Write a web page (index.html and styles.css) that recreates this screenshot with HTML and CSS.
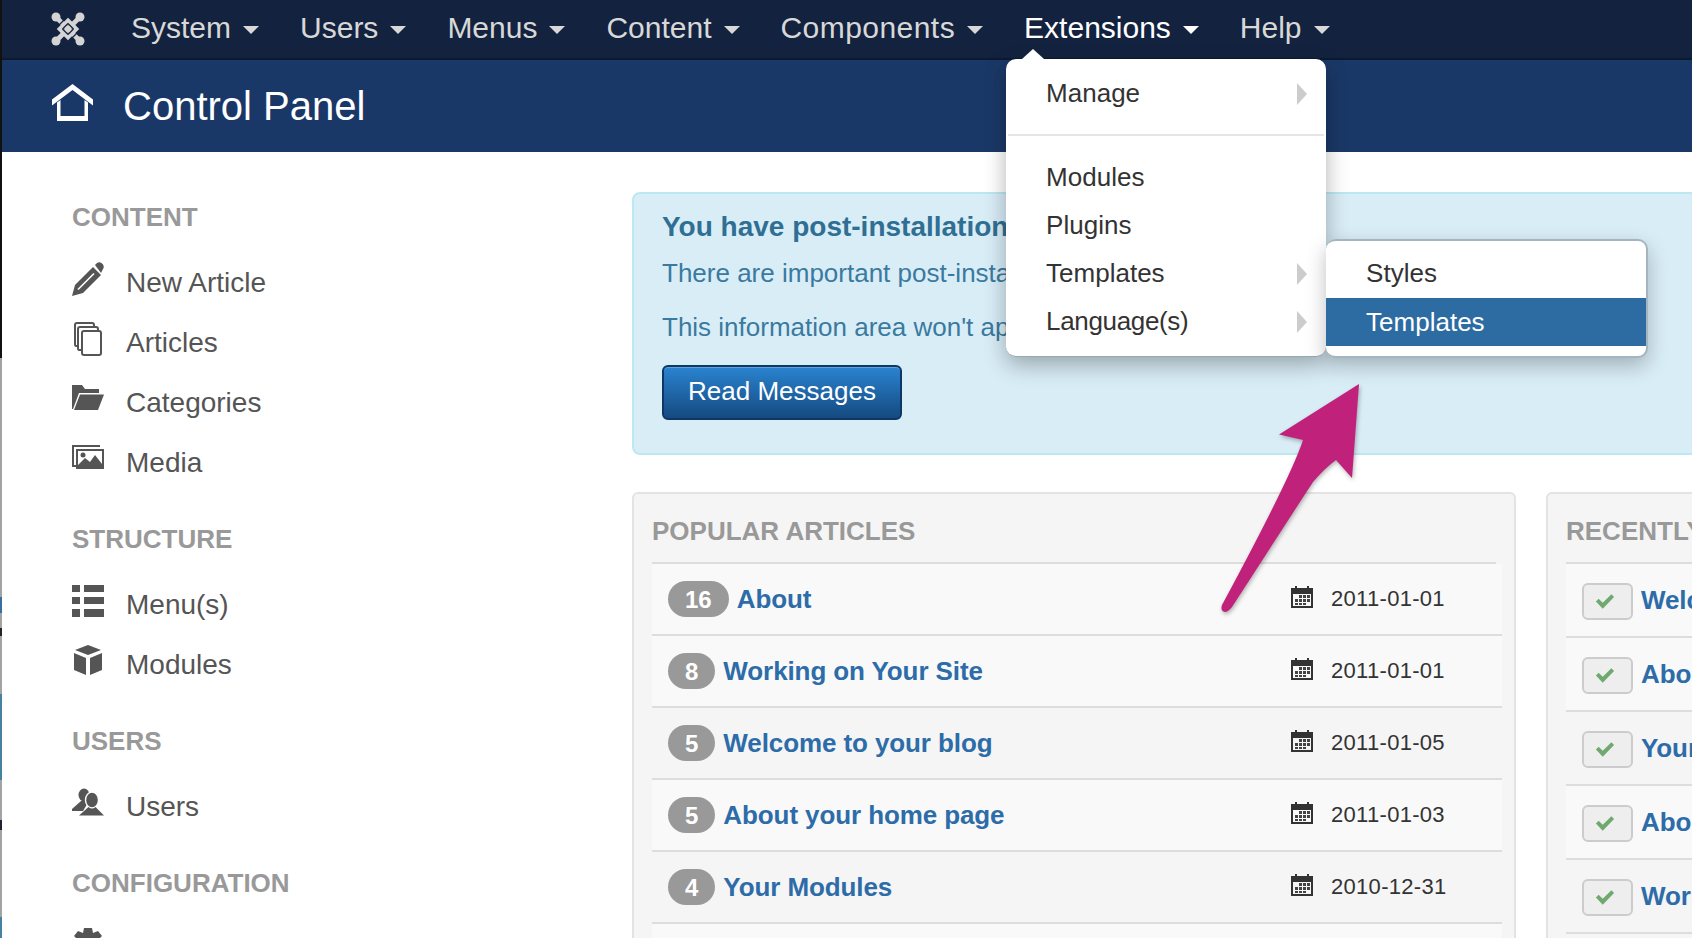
FILE: index.html
```html
<!DOCTYPE html>
<html lang="en">
<head>
    <meta charset="UTF-8">
    <meta name="viewport" content="width=device-width, initial-scale=1.0">
    <title>Control Panel</title>
    <link rel="stylesheet" href="styles.css">
</head>
<body>
    <div class="edge"></div>

    <nav class="navbar">
        <svg class="logo" viewBox="0 0 34 34">
            <g fill="#d4d4d4">
                <circle cx="5" cy="5" r="4.500"/><circle cx="29" cy="5" r="4.500"/>
                <circle cx="5" cy="29" r="4.500"/><circle cx="29" cy="29" r="4.500"/>
            </g>
            <g fill="none" stroke="#d4d4d4" stroke-width="4.600">
                <path d="M6 6L22 22M28 6L12 22M6 28L22 12M28 28L12 12"/>
                <path d="M17 9L25 17L17 25L9 17Z"/>
            </g>
            <g fill="none" stroke="#13233f" stroke-width="1.200">
                <path d="M11.500 17L17 11.500M17 22.500L22.500 17M13 8L8 13M21 26L26 21"/>
                <path d="M17 11.500L22.500 17M11.500 17L17 22.500"/>
            </g>
        </svg>
        <ul class="nav-list">
            <li class="nav-item">System<span class="caret"></span></li>
            <li class="nav-item">Users<span class="caret"></span></li>
            <li class="nav-item">Menus<span class="caret"></span></li>
            <li class="nav-item">Content<span class="caret"></span></li>
            <li class="nav-item wide">Components<span class="caret"></span></li>
            <li class="nav-item active">
                Extensions<span class="caret"></span>
                <ul class="dropdown">
                    <li class="dropdown-item">Manage<span class="sub-caret"></span></li>
                    <li class="divider"></li>
                    <li class="dropdown-item">Modules</li>
                    <li class="dropdown-item">Plugins</li>
                    <li class="dropdown-item open">
                        Templates<span class="sub-caret"></span>
                        <ul class="submenu">
                            <li class="dropdown-item">Styles</li>
                            <li class="dropdown-item selected">Templates</li>
                        </ul>
                    </li>
                    <li class="dropdown-item tight">Language(s)<span class="sub-caret"></span></li>
                </ul>
            </li>
            <li class="nav-item">Help<span class="caret"></span></li>
        </ul>
    </nav>

    <header class="subhead">
        <svg class="home-icon" viewBox="0 0 41 38">
            <path d="M0 15.500L20.500 0L41 15.500V21.500L20.500 6L0 21.500Z" fill="#fff"/>
            <path d="M5 18.500L8.500 16V32H32.500V16L36 18.500V37H5Z" fill="#fff"/>
        </svg>
        <h1>Control Panel</h1>
    </header>

    <div class="page">
        <aside class="sidebar">
            <h3>CONTENT</h3>
            <ul class="side-list">
                <li>
                    <svg class="side-icon" viewBox="0 0 32 34"><path d="M0 34L3 23L21 5L29 13L11 31Z"/><path d="M6 27.500L22 11.500" stroke="#fff" stroke-width="1.600"/><path d="M23 3L25 1Q27 -0.500 29.500 1L31 2.500Q32.500 5 31 7L29 11Z"/></svg>
                    New Article
                </li>
                <li>
                    <svg class="side-icon" viewBox="0 0 32 34"><g fill="none" stroke="#555" stroke-width="2"><rect x="10" y="9" width="19" height="24" rx="2"/><path d="M10 28H7Q6 28 6 26V7Q6 5 8 5H24Q26 5 26 7V9"/><path d="M6 24H4Q3 24 3 22V3Q3 1 5 1H20Q22 1 22 3V5"/></g></svg>
                    Articles
                </li>
                <li>
                    <svg class="side-icon" viewBox="0 0 32 34"><path d="M0 3H10L13 7H27V11H7L1 27H0Z"/><path d="M8 12.500H32L26 28H2Z"/></svg>
                    Categories
                </li>
                <li>
                    <svg class="side-icon" viewBox="0 0 32 34"><path d="M0 3H28V5H2V23H4V25H0Z"/><path d="M4 7H32V27H4ZM6 9V25H30V9Z" fill-rule="evenodd"/><circle cx="11" cy="13" r="2.500"/><path d="M6 23L13 16L18 20L23 13L30 22V25H6Z"/></svg>
                    Media
                </li>
            </ul>

            <h3>STRUCTURE</h3>
            <ul class="side-list">
                <li>
                    <svg class="side-icon" viewBox="0 0 32 34"><path d="M0 1H8V8H0ZM12 1H32V8H12ZM0 13H8V20H0ZM12 13H32V20H12ZM0 25H8V33H0ZM12 25H32V33H12Z"/></svg>
                    Menu(s)
                </li>
                <li>
                    <svg class="side-icon" viewBox="0 0 32 34"><path d="M16 1L29 6L16 11L3 6Z"/><path d="M2 9L14 14V31L2 26Z"/><path d="M30 9L18 14V31L30 26Z"/></svg>
                    Modules
                </li>
            </ul>

            <h3>USERS</h3>
            <ul class="side-list">
                <li>
                    <svg class="side-icon" viewBox="0 0 32 34"><ellipse cx="12" cy="9" rx="5.500" ry="6.500"/><path d="M9 15L0 23V25H11L17 15Z"/><ellipse cx="20" cy="14" rx="6.500" ry="8" stroke="#fff" stroke-width="1.400"/><path d="M16.500 21L7 29.500H32L23.500 21Q20 24 16.500 21Z"/></svg>
                    Users
                </li>
            </ul>

            <h3>CONFIGURATION</h3>
            <ul class="side-list">
                <li>
                    <svg class="side-icon" viewBox="0 0 32 34"><path d="M12 0H20L21 5L26 3L30 8L27 11L32 14V22L0 22V14L5 11L2 8L6 3L11 5Z"/></svg>
                    Global Configuration
                </li>
            </ul>
        </aside>

        <main class="main">
            <section class="alert">
                <h4>You have post-installation messages</h4>
                <p>There are important post-installation notices that require your attention.</p>
                <p>This information area won't appear when you have hidden all the messages.</p>
                <button class="btn-primary">Read Messages</button>
            </section>

            <div class="wells">
                <section class="well">
                    <h2 class="well-title">POPULAR ARTICLES</h2>
                    <div class="row">
                        <span class="badge">16</span><a class="row-link">About</a>
                        <span class="date"><svg class="cal" viewBox="0 0 22 22"><use href="#cal-icon"/></svg>2011-01-01</span>
                    </div>
                    <div class="row">
                        <span class="badge">8</span><a class="row-link">Working on Your Site</a>
                        <span class="date"><svg class="cal" viewBox="0 0 22 22"><use href="#cal-icon"/></svg>2011-01-01</span>
                    </div>
                    <div class="row">
                        <span class="badge">5</span><a class="row-link">Welcome to your blog</a>
                        <span class="date"><svg class="cal" viewBox="0 0 22 22"><use href="#cal-icon"/></svg>2011-01-05</span>
                    </div>
                    <div class="row">
                        <span class="badge">5</span><a class="row-link">About your home page</a>
                        <span class="date"><svg class="cal" viewBox="0 0 22 22"><use href="#cal-icon"/></svg>2011-01-03</span>
                    </div>
                    <div class="row">
                        <span class="badge">4</span><a class="row-link">Your Modules</a>
                        <span class="date"><svg class="cal" viewBox="0 0 22 22"><use href="#cal-icon"/></svg>2010-12-31</span>
                    </div>
                    <div class="row"></div>
                </section>

                <section class="well">
                    <h2 class="well-title">RECENTLY ADDED ARTICLES</h2>
                    <div class="row tall">
                        <span class="check"><svg viewBox="0 0 22 18"><use href="#check-icon"/></svg></span><a class="row-link">Welcome to your blog</a>
                    </div>
                    <div class="row tall">
                        <span class="check"><svg viewBox="0 0 22 18"><use href="#check-icon"/></svg></span><a class="row-link">About your home page</a>
                    </div>
                    <div class="row tall">
                        <span class="check"><svg viewBox="0 0 22 18"><use href="#check-icon"/></svg></span><a class="row-link">Your Template</a>
                    </div>
                    <div class="row tall">
                        <span class="check"><svg viewBox="0 0 22 18"><use href="#check-icon"/></svg></span><a class="row-link">About</a>
                    </div>
                    <div class="row tall">
                        <span class="check"><svg viewBox="0 0 22 18"><use href="#check-icon"/></svg></span><a class="row-link">Working on Your Site</a>
                    </div>
                </section>
            </div>
        </main>
    </div>

    <!-- annotation arrow drawn on top of the screenshot -->
    <svg class="arrow" viewBox="0 0 150 240">
        <path d="M144 9L64 59.500L88 65Q76 102 7 230Q5 236 10 237Q13 237 17 232Q70 150 98 107Q110 93 121 85L137 103Z" fill="#c0217a"/>
    </svg>

    <svg class="defs" width="0" height="0">
        <defs>
            <g id="cal-icon">
                <path d="M0 2H4V0H6V2H16V0H18V2H22V22H0ZM2 8V20H20V8Z" fill="#333" fill-rule="evenodd"/>
                <path d="M8 9H11V12H8ZM12 9H15V12H12ZM16 9H19V12H16ZM4 13H7V16H4ZM8 13H11V16H8ZM12 13H15V16H12ZM16 13H19V16H16ZM4 17H7V19H4ZM8 17H11V19H8ZM12 17H15V19H12Z" fill="#444"/>
            </g>
            <path id="check-icon" d="M1 9L4 6L8.500 10.500L18 1L21 4L8.500 17Z" fill="#6fa96f"/>
        </defs>
    </svg>
</body>
</html>
```

FILE: styles.css
```css
html, body {
    margin: 0;
    padding: 0;
}
body {
    width: 1692px;
    height: 938px;
    overflow: hidden;
    position: relative;
    background-color: #fff;
    font-family: "Liberation Sans", Arial, sans-serif;
    font-size: 26px;
    color: #333;
}
ul {
    list-style: none;
    margin: 0;
    padding: 0;
}

/* sliver of the window behind, down the left side */
.edge {
    position: absolute;
    left: 0;
    top: 0;
    bottom: 0;
    width: 2px;
    z-index: 5;
    background: linear-gradient(to bottom,
        #111 0, #111 358px, #a3a3a3 358px, #a3a3a3 597px,
        #3a6da0 597px, #3a6da0 613px, #a3a3a3 613px, #a3a3a3 628px,
        #222 628px, #222 636px, #a3a3a3 636px, #a3a3a3 694px,
        #46829f 694px, #46829f 780px, #a3a3a3 780px, #a3a3a3 820px,
        #223 820px, #223 830px, #a3a3a3 830px, #a3a3a3 917px,
        #46829f 917px);
}

/* top bar */
.navbar {
    display: flex;
    align-items: center;
    height: 58px;
    padding-left: 51px;
    background-color: #13233f;
    border-bottom: 2px solid #0c1a30;
    color: #d8d8d8;
    font-size: 30px;
}
.logo {
    width: 34px;
    height: 34px;
    margin-right: 46px;
}
.nav-list {
    display: flex;
    align-items: center;
    margin-top: -2px;
}
.nav-item {
    position: relative;
    display: flex;
    align-items: center;
    margin-right: 41px;
}
.nav-item.wide {
    letter-spacing: 0.45px;
}
.nav-item.active {
    color: #fff;
}
.caret {
    width: 0;
    height: 0;
    margin-left: 12px;
    margin-top: 3px;
    border-left: 8px solid transparent;
    border-right: 8px solid transparent;
    border-top: 8px solid currentColor;
}

/* extensions menu */
.dropdown {
    position: absolute;
    left: -18px;
    top: 48px;
    width: 320px;
    padding: 10px 0 11px;
    background-color: #fff;
    color: #333;
    font-size: 26px;
    border-radius: 10px;
    border-bottom: 1px solid #9aa7ae;
    box-shadow: 0 8px 22px rgba(0, 0, 0, 0.3);
    z-index: 10;
}
.dropdown::before {
    content: "";
    position: absolute;
    left: 16px;
    top: -10px;
    border-left: 11px solid transparent;
    border-right: 11px solid transparent;
    border-bottom: 10px solid #fff;
}
.dropdown-item {
    position: relative;
    height: 48px;
    line-height: 48px;
    padding-left: 40px;
}
.dropdown-item.tight {
    letter-spacing: -0.35px;
}
.divider {
    height: 2px;
    margin: 17px 2px 17px;
    background-color: #e5e5e5;
}
.sub-caret {
    position: absolute;
    right: 19px;
    top: 14px;
    border-top: 11px solid transparent;
    border-bottom: 11px solid transparent;
    border-left: 10px solid #ccc;
}
.submenu {
    position: absolute;
    left: 100%;
    top: -10px;
    width: 320px;
    padding: 8px 0 10px;
    background-color: #fff;
    border: 1px solid #a5b5c0;
    border-width: 2px 2px 2px 0;
    border-radius: 10px;
    box-shadow: 0 8px 20px rgba(0, 0, 0, 0.25);
}
.dropdown-item.selected {
    margin-top: 1px;
    background-color: #2d6ca2;
    color: #fff;
}

/* page title */
.subhead {
    display: flex;
    align-items: center;
    height: 92px;
    padding-left: 52px;
    background-color: #1a3867;
    color: #fff;
}
.subhead h1 {
    margin: 0;
    font-size: 40px;
    font-weight: normal;
}
.home-icon {
    width: 41px;
    height: 38px;
    margin-right: 30px;
    margin-top: -6px;
}

.page {
    display: flex;
    height: 786px;
    overflow: hidden;
}

/* left column */
.sidebar {
    flex: 0 0 560px;
    padding: 50px 0 0 72px;
}
.sidebar h3 {
    margin: 0 0 21px;
    font-size: 26px;
    line-height: 30px;
    color: #999;
}
.side-list {
    margin-bottom: 31px;
}
.side-list li {
    display: flex;
    align-items: center;
    height: 60px;
    font-size: 28px;
    color: #555;
}
.side-icon {
    width: 32px;
    height: 34px;
    margin-right: 22px;
    margin-bottom: 8px;
    fill: #555;
}

/* right column */
.main {
    flex: 0 0 1060px;
    padding-top: 40px;
    overflow: hidden;
}
.alert {
    box-sizing: border-box;
    width: 1200px;
    height: 263px;
    padding: 17px 28px 0;
    background-color: #d9edf7;
    border: 2px solid #bce8f1;
    border-radius: 8px;
    color: #3a7a9f;
}
.alert h4 {
    margin: 0 0 13px;
    font-size: 28px;
    line-height: 32px;
    color: #2f6f93;
}
.alert p {
    margin: 0 0 20px;
    line-height: 34px;
    white-space: nowrap;
}
.alert p:last-of-type {
    margin-bottom: 21px;
}
.btn-primary {
    display: block;
    height: 55px;
    padding: 0 24px 2px;
    font: inherit;
    color: #fff;
    background: linear-gradient(to bottom, #2a83d0, #154a80);
    border: 2px solid #0e3765;
    border-radius: 6px;
    box-shadow: inset 0 1px 0 rgba(255, 255, 255, 0.25);
}

.wells {
    display: flex;
    gap: 30px;
    margin-top: 37px;
}
.well {
    box-sizing: border-box;
    flex: 0 0 884px;
    height: 600px;
    padding: 0 18px;
    background-color: #f5f5f5;
    border: 2px solid #e3e3e3;
    border-radius: 6px;
}
.well-title {
    margin: 0;
    height: 68px;
    line-height: 74px;
    font-size: 26px;
    color: #999;
    border-bottom: 2px solid #ddd;
}
.row {
    box-sizing: border-box;
    display: flex;
    align-items: center;
    height: 72px;
    margin-right: -6px;
    padding-left: 16px;
    border-bottom: 2px solid #ddd;
}
.row:nth-of-type(odd) {
    background-color: #f5f5f5;
}
.well-title + .row,
.row:nth-of-type(even) {
    background-color: #f9f9f9;
}
.row.tall {
    height: 74px;
}
.badge {
    height: 36px;
    padding: 0 17px;
    margin-right: 8px;
    line-height: 38px;
    border-radius: 18px;
    background-color: #999;
    color: #fff;
    font-size: 24px;
    font-weight: bold;
}
.row-link {
    font-weight: bold;
    letter-spacing: -0.1px;
    color: #2d6ca8;
    white-space: nowrap;
}
.date {
    display: flex;
    align-items: center;
    margin-left: auto;
    width: 211px;
    font-size: 22px;
    letter-spacing: 0.3px;
    color: #333;
}
.cal {
    width: 22px;
    height: 22px;
    margin-right: 18px;
    margin-top: -5px;
}
.check {
    box-sizing: border-box;
    display: flex;
    align-items: center;
    justify-content: center;
    width: 51px;
    height: 37px;
    margin-top: 2px;
    margin-right: 8px;
    padding-right: 6px;
    background-color: #eee;
    border: 2px solid #ccc;
    border-radius: 6px;
}
.check svg {
    width: 20px;
    height: 17px;
}

.arrow {
    position: absolute;
    left: 1215px;
    top: 375px;
    width: 150px;
    height: 240px;
    z-index: 20;
    filter: drop-shadow(1px 2px 2px rgba(0, 0, 0, 0.3));
}
.defs {
    position: absolute;
}
```
